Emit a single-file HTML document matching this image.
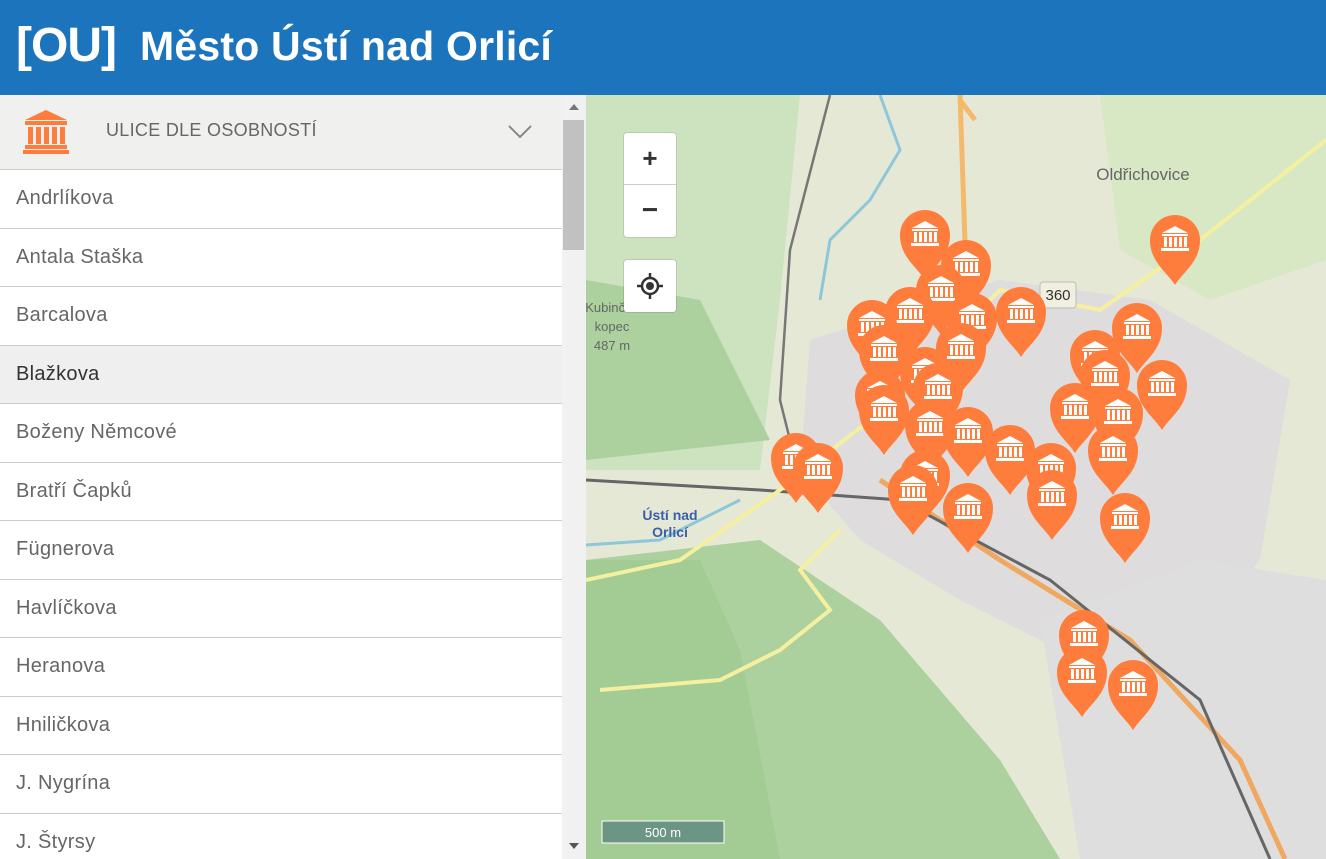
<!DOCTYPE html>
<html><head><meta charset="utf-8"><style>
*{margin:0;padding:0;box-sizing:border-box}
body{width:1326px;height:859px;overflow:hidden;font-family:"Liberation Sans",sans-serif;background:#fff;position:relative}
#hdr{position:absolute;left:0;top:0;width:1326px;height:95px;background:#1c75bc;color:#fff}
#logo{position:absolute;left:16px;top:18px;font-size:48px;font-weight:bold;letter-spacing:-1px}
#title{position:absolute;left:140px;top:23px;font-size:41px;font-weight:bold;letter-spacing:0.2px}
#side{position:absolute;left:0;top:95px;width:562px;height:764px;overflow:hidden}
#sec{height:75px;background:#f0f0ef;border-bottom:1px solid #ccc;position:relative}
#sec .t{position:absolute;left:106px;top:25px;font-size:18px;color:#666;letter-spacing:0.3px}
.row{height:58.5px;border-bottom:1px solid #ccc;font-size:20px;color:#666;padding-left:16px;line-height:57px;letter-spacing:0.3px}
.row.sel{background:#efefef;color:#333}
#sb{position:absolute;left:562px;top:95px;width:24px;height:764px;background:#f1f1f1}
#thumb{position:absolute;left:1px;top:25px;width:21px;height:130px;background:#c1c1c1}
#map{position:absolute;left:586px;top:95px;width:740px;height:764px;overflow:hidden;background:#ecebe4}
.btn{position:absolute;left:38px;width:52px;background:#fff;border-radius:3px;box-shadow:0 0 0 1px rgba(0,0,0,.1)}
</style></head><body>
<div id="hdr"><div id="logo">[OU]</div><div id="title">Město Ústí nad Orlicí</div></div>
<div id="side">
<div id="sec">
<svg style="position:absolute;left:23px;top:15px" width="46" height="44" viewBox="0 0 46 44"><path d="M23 0L44 10H2Z" fill="#fe7d3d"/><rect x="2" y="11" width="42" height="4" fill="#fe7d3d"/><rect x="5" y="17" width="5" height="17" fill="#fe7d3d"/><rect x="13" y="17" width="5" height="17" fill="#fe7d3d"/><rect x="21" y="17" width="5" height="17" fill="#fe7d3d"/><rect x="29" y="17" width="5" height="17" fill="#fe7d3d"/><rect x="37" y="17" width="5" height="17" fill="#fe7d3d"/><rect x="2" y="35" width="42" height="4" fill="#fe7d3d"/><rect x="0" y="40" width="46" height="4" fill="#fe7d3d"/></svg>
<div class="t">ULICE DLE OSOBNOSTÍ</div>
<svg style="position:absolute;left:508px;top:30px" width="24" height="14"><path d="M1 1L12 12L23 1" stroke="#888" stroke-width="2" fill="none"/></svg>
</div>
<div class="row">Andrlíkova</div><div class="row">Antala Staška</div><div class="row">Barcalova</div><div class="row sel">Blažkova</div><div class="row">Boženy Němcové</div><div class="row">Bratří Čapků</div><div class="row">Fügnerova</div><div class="row">Havlíčkova</div><div class="row">Heranova</div><div class="row">Hniličkova</div><div class="row">J. Nygrína</div><div class="row">J. Štyrsy</div>
</div>
<div id="sb"><div id="thumb"></div>
<svg style="position:absolute;left:7px;top:9px" width="10" height="6"><path d="M0 6L5 0L10 6Z" fill="#777"/></svg>
<svg style="position:absolute;left:7px;top:748px" width="10" height="6"><path d="M0 0L5 6L10 0Z" fill="#555"/></svg></div>
<div id="map">
<svg width="740" height="764" viewBox="586 95 740 764" style="position:absolute;left:0;top:0">
<defs>
<g id="m"><path d="M0 45C-8 32-25 22-25 0A25 25 0 1 1 25 0C25 22 8 32 0 45Z" fill="#fe7d3d"/>
<path d="M0-14L13-7H-13Z" fill="#fff"/><rect x="-13" y="-6" width="26" height="2" fill="#fff"/><rect x="-11" y="-3" width="3" height="10" fill="#fff"/><rect x="-6" y="-3" width="3" height="10" fill="#fff"/><rect x="-1" y="-3" width="3" height="10" fill="#fff"/><rect x="4" y="-3" width="3" height="10" fill="#fff"/><rect x="9" y="-3" width="3" height="10" fill="#fff"/><rect x="-14" y="8" width="28" height="3" fill="#fff"/></g>
</defs>
<rect x="586" y="95" width="740" height="764" fill="#e6e8d6"/>
<path d="M586 95H800L780 300L760 470L586 470Z" fill="#cde3c0"/>
<path d="M586 280L700 300L770 440L586 460Z" fill="#acd09e"/>
<path d="M586 560L760 540L880 620L1000 760L1060 859H586Z" fill="#acd09e"/>
<path d="M586 560L700 560L740 650L780 859H586Z" fill="#a3cb94"/>
<path d="M810 340L1000 280L1150 300L1290 380L1260 560L1200 640L1130 720L1060 650L960 600L860 540L800 470Z" fill="#dedcdc"/>
<path d="M1040 620L1200 560L1326 580V859H1080Z" fill="#dfdedf"/>
<path d="M1100 95H1326V260L1210 300L1120 250Z" fill="#d8e8c4"/>
<path d="M960 95L968 330M960 100L975 120" stroke="#f5b96b" stroke-width="5" fill="none"/>
<path d="M880 480L1000 560L1130 640L1240 760L1285 859" stroke="#f0a860" stroke-width="5" fill="none"/>
<path d="M586 480L760 490L900 500L1050 580L1200 700L1270 859" stroke="#666" stroke-width="3" fill="none"/>
<path d="M830 95L790 250L780 400L800 480" stroke="#777" stroke-width="2.5" fill="none"/>
<path d="M586 580L680 560L780 490L870 420L1000 290L1100 310L1200 240L1326 140" stroke="#f4f0a0" stroke-width="4" fill="none"/>
<path d="M840 530L800 570L830 610L780 650L720 680L600 690" stroke="#f4f0a0" stroke-width="4" fill="none"/>
<path d="M586 545L660 540L740 500M880 95L900 150L870 200L830 240L820 300" stroke="#8ec7d9" stroke-width="3" fill="none"/>
<rect x="1040" y="282" width="36" height="26" rx="3" fill="#f0efe0" stroke="#bbb"/><text x="1058" y="300" font-size="15" text-anchor="middle" fill="#333" font-family="Liberation Sans">360</text>
<text x="1143" y="180" font-size="17" text-anchor="middle" fill="#666" font-family="Liberation Sans">Oldřichovice</text>
<text x="670" y="520" font-size="14" text-anchor="middle" fill="#3a5fa8" font-weight="bold" font-family="Liberation Sans">Ústí nad</text>
<text x="670" y="537" font-size="14" text-anchor="middle" fill="#3a5fa8" font-weight="bold" font-family="Liberation Sans">Orlicí</text>
<text x="612" y="312" font-size="13" text-anchor="middle" fill="#666" font-family="Liberation Sans">Kubinčův</text>
<text x="612" y="331" font-size="13" text-anchor="middle" fill="#666" font-family="Liberation Sans">kopec</text>
<text x="612" y="350" font-size="13" text-anchor="middle" fill="#666" font-family="Liberation Sans">487 m</text>
<rect x="602" y="821" width="122" height="22" fill="rgba(100,140,130,.85)" stroke="#fff"/><text x="663" y="837" font-size="13" text-anchor="middle" fill="#fff" font-family="Liberation Sans">500 m</text>
<use href="#m" x="925" y="235"/><use href="#m" x="966" y="265"/><use href="#m" x="1175" y="240"/><use href="#m" x="941" y="290"/><use href="#m" x="910" y="312"/><use href="#m" x="872" y="325"/><use href="#m" x="972" y="318"/><use href="#m" x="1021" y="312"/><use href="#m" x="1137" y="328"/><use href="#m" x="884" y="350"/><use href="#m" x="961" y="348"/><use href="#m" x="1095" y="355"/><use href="#m" x="1105" y="375"/><use href="#m" x="1162" y="385"/><use href="#m" x="925" y="372"/><use href="#m" x="938" y="388"/><use href="#m" x="880" y="395"/><use href="#m" x="1075" y="408"/><use href="#m" x="1118" y="413"/><use href="#m" x="884" y="410"/><use href="#m" x="930" y="425"/><use href="#m" x="968" y="432"/><use href="#m" x="1010" y="450"/><use href="#m" x="1113" y="450"/><use href="#m" x="796" y="458"/><use href="#m" x="818" y="468"/><use href="#m" x="925" y="475"/><use href="#m" x="913" y="490"/><use href="#m" x="1051" y="468"/><use href="#m" x="1052" y="495"/><use href="#m" x="968" y="508"/><use href="#m" x="1125" y="518"/><use href="#m" x="1084" y="635"/><use href="#m" x="1082" y="672"/><use href="#m" x="1133" y="685"/>
</svg>
<div class="btn" style="top:38px;height:104px"><div style="height:52px;border-bottom:1px solid #ccc;text-align:center;font-size:26px;font-weight:bold;line-height:50px;color:#333">+</div><div style="height:52px;text-align:center;font-size:28px;font-weight:bold;line-height:50px;color:#333">−</div></div>
<div class="btn" style="top:165px;height:52px"><svg style="position:absolute;left:13px;top:13px" width="26" height="26" viewBox="0 0 26 26"><circle cx="13" cy="13" r="8" stroke="#333" stroke-width="2.5" fill="none"/><circle cx="13" cy="13" r="4" fill="#333"/><path d="M13 0V5M13 21V26M0 13H5M21 13H26" stroke="#333" stroke-width="2.5"/></svg></div>
</div>
</body></html>
